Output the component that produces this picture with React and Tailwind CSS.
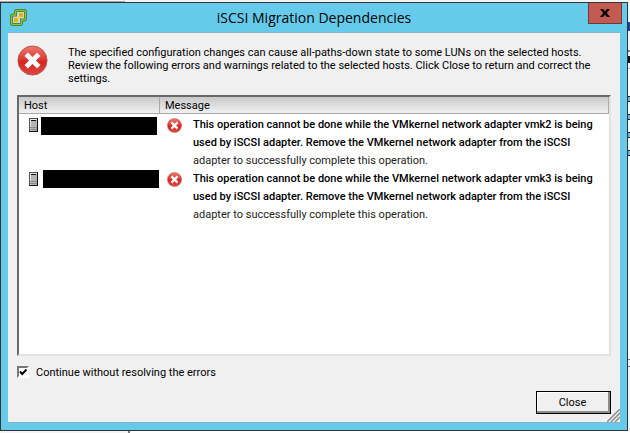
import React, { useState } from 'react';

const ROWS = [
    { id: 'host-1', adapter: 'vmk2', name: 'mt-[1px] ml-[3px] mr-[3px]' },
    { id: 'host-2', adapter: 'vmk3', name: 'ml-[5px] mr-[1px]' },
];

// edge of the window that sits behind the dialog
const BACKDROP = ['mt-[27px]', 'mt-[12px]', 'mt-[12px]', 'mt-[12px]'];

function ErrorIcon({ className }) {
    return (
        <svg viewBox="0 0 32 32" className={className} aria-hidden="true">
            <defs>
                <linearGradient id="err" x1="0" y1="0" x2="0" y2="1">
                    <stop offset="0" stopColor="#ec7a72" />
                    <stop offset="0.45" stopColor="#df3a32" />
                    <stop offset="0.55" stopColor="#d6241e" />
                    <stop offset="1" stopColor="#dd4a42" />
                </linearGradient>
            </defs>
            <circle cx="16" cy="16" r="15" fill="url(#err)" stroke="#b9534d" strokeWidth="1" />
            <path d="M9.5 9.5l13 13M22.5 9.5l-13 13" stroke="#fff" strokeWidth="5" />
        </svg>
    );
}

function VmIcon() {
    return (
        <svg viewBox="0 0 17 17" className="h-[17px] w-[17px]" aria-hidden="true">
            <path d="M7 1.5h7Q15.5 1.5 15.5 3v6.5Q15.5 11 14 11h-2.500v3Q11.500 15.500 10 15.500H3Q1.500 15.500 1.500 14V7.500Q1.500 6 3 6h2.500V3Q5.500 1.500 7 1.500z" fill="#b9dfe6" stroke="#3c7420" strokeWidth="2.800" />
            <path d="M7 1.5h7Q15.5 1.5 15.5 3v6.5Q15.5 11 14 11h-2.500v3Q11.500 15.500 10 15.500H3Q1.500 15.500 1.500 14V7.500Q1.500 6 3 6h2.500V3Q5.500 1.500 7 1.500z" fill="none" stroke="#8fc43a" strokeWidth="1.400" />
            <path d="M9 4h4v4H9zM4 9h4v4H4z" fill="#f0a91c" />
            <path d="M7 7h3v3H7z" fill="#f7d04a" />
        </svg>
    );
}

function HostIcon() {
    return (
        <svg viewBox="0 0 9 14" className="mt-[2px] h-[14px] w-[9px] shrink-0" shapeRendering="crispEdges" aria-hidden="true">
            <rect width="9" height="14" fill="#111" />
            <rect width="8" height="1" fill="#555" />
            <rect width="1" height="13" fill="#555" />
            <rect x="1" y="1" width="7" height="12" fill="#e4e4e4" />
            <rect x="2" y="2" width="6" height="11" fill="#b4b4b4" />
            <rect x="2" y="2" width="5" height="1" fill="#111" />
            <rect x="1" y="9" width="7" height="1" fill="#8a8a8a" />
            <rect x="1" y="11" width="7" height="1" fill="#8a8a8a" />
        </svg>
    );
}

function Grip() {
    return (
        <svg viewBox="0 0 13 13" className="h-[13px] w-[13px]" aria-hidden="true">
            <path d="M1 13L13 1M5 13l8-8M9 13l4-4" stroke="#fff" strokeWidth="1" />
            <path d="M0 13L13 0M4 13l9-9M8 13l5-5" stroke="#8a8a8a" strokeWidth="1.500" />
        </svg>
    );
}

export default function App() {
    const [checked, setChecked] = useState(true);

    return (
        <div className="flex h-screen flex-col overflow-hidden bg-[#f3f3f3] font-['Roboto','Noto_Sans',sans-serif] text-[11px] text-black">
            <div className="h-[2px] w-[125px] shrink-0 border-b border-[#a5a5a5]" />
            <div className="flex min-h-0 grow">
                <main className="flex min-w-0 grow flex-col border border-[#333] bg-[#66caea] px-[7px] pb-[7px]">
                    <header className="grid h-[29px] shrink-0 grid-cols-[50px_1fr_50px]">
                        <div className="pt-[6px] pl-[2px]"><VmIcon /></div>
                        <h1 className="text-center font-['Open_Sans','Noto_Sans',sans-serif] text-[14px] leading-[30px]">iSCSI Migration Dependencies</h1>
                        <button className="mr-[-2px] ml-auto flex h-[21px] w-[34px] items-center justify-center border border-t-0 border-[#6d3a35] bg-[#c35b52]" aria-label="Close window">
                            <svg viewBox="0 0 10 8" className="h-[8px] w-[10px]" aria-hidden="true">
                                <path d="M0 0h3.200L5 2.400 6.800 0H10L6.700 4 10 8H6.800L5 5.600 3.200 8H0l3.300-4z" />
                            </svg>
                        </button>
                    </header>
                    <section className="relative flex min-h-0 grow flex-col border-y border-[#8bb3c2] bg-[#f0f0f0]">
                        <div className="flex h-[62px] shrink-0 gap-[20px] pt-[12px] pl-[9px]">
                            <ErrorIcon className="h-[31px] w-[31px] shrink-0" />
                            <p className="pt-[1px] leading-[13px] whitespace-nowrap">
                                The specified configuration changes can cause all-paths-down state to some LUNs on the selected hosts.<br />
                                Review the following errors and warnings related to the selected hosts. Click Close to return and correct the<br />
                                settings.
                            </p>
                        </div>
                        <div className="mx-[9px] min-h-0 grow border-2 border-t-[#696969] border-r-[#e3e3e3] border-b-[#e3e3e3] border-l-[#696969] bg-white">
                            <table className="w-full table-fixed border-separate border-spacing-0">
                                <thead>
                                    <tr className="h-[17px] bg-linear-to-b from-[#c9c9c9] to-[#f3f3f3] text-left leading-[15px]">
                                        <th className="w-[141px] border-r border-b border-[#aaa] p-0 pl-[5px] font-normal">Host</th>
                                        <th className="border-r border-b border-[#aaa] p-0 pl-[5px] font-normal">Message</th>
                                    </tr>
                                </thead>
                                <tbody className="before:block before:h-[2px]">
                                    {ROWS.map((row) => (
                                        <tr key={row.id} className="h-[54px] align-top">
                                            <td className="p-0">
                                                <div className="flex items-start pl-[10px]">
                                                    <HostIcon />
                                                    <div className={`h-[18px] grow bg-black ${row.name}`} />
                                                </div>
                                            </td>
                                            <td className="p-0">
                                                <div className="flex gap-[11px] pl-[7px] leading-[18px]">
                                                    <ErrorIcon className="mt-[2px] h-[15px] w-[15px] shrink-0" />
                                                    <p className="whitespace-nowrap">
                                                        <span className="font-medium">This operation cannot be done while the VMkernel network adapter {row.adapter} is being</span><br />
                                                        <span className="font-medium">used by iSCSI adapter. Remove the VMkernel network adapter from the iSCSI</span><br />
                                                        <span className="text-[#222]">adapter to successfully complete this operation.</span>
                                                    </p>
                                                </div>
                                            </td>
                                        </tr>
                                    ))}
                                </tbody>
                            </table>
                        </div>
                        <footer className="flex h-[66px] shrink-0 items-start justify-between px-[9px] pt-[8px]">
                            <label className="flex h-[16px] items-center gap-[7px]">
                                <span className="grid">
                                    <input
                                        type="checkbox"
                                        checked={checked}
                                        onChange={() => setChecked(!checked)}
                                        className="peer col-start-1 row-start-1 h-[12px] w-[12px] appearance-none border-2 border-t-[#777] border-r-white border-b-white border-l-[#777] bg-white"
                                    />
                                    <svg viewBox="0 0 12 12" className="pointer-events-none invisible col-start-1 row-start-1 h-[12px] w-[12px] peer-checked:visible" aria-hidden="true">
                                        <path d="M3 5.500l2.200 2.500L9.500 3.500" fill="none" stroke="#000" strokeWidth="2" />
                                    </svg>
                                </span>
                                <span className="pt-[2px]">Continue without resolving the errors</span>
                            </label>
                            <button className="mt-[27px] h-[23px] w-[75px] border border-black bg-[#f0f0f0] pt-[1px] pr-[2px] shadow-[inset_-2px_-2px_0_#8c8c8c,inset_1px_1px_0_#fff]">Close</button>
                        </footer>
                        <div className="absolute right-0 bottom-0"><Grip /></div>
                    </section>
                </main>
                <div className="flex w-[2px] shrink-0 flex-col overflow-hidden" aria-hidden="true">
                    <div className="mt-[20px] h-[9px] shrink-0 bg-[#2b3a9a]" />
                    <div className="mt-[19px] h-[2px] shrink-0 bg-[#777]" />
                    <div className="mt-[4px] h-[7px] shrink-0 bg-[#111]" />
                    <div className="mt-[5px] h-px shrink-0 bg-[#aaa]" />
                    <div className="flex grow flex-col bg-white">
                        {BACKDROP.map((gap, i) => (
                            <div key={i} className={`h-[6px] w-[2px] shrink-0 border-y border-[#222] bg-[#7ab0d8] ${gap}`} />
                        ))}
                    </div>
                    <div className="h-px shrink-0 bg-[#777]" />
                    <div className="mt-[6px] mb-[64px] h-px shrink-0 bg-[#777]" />
                </div>
            </div>
            <div className="flex h-[2px] shrink-0 bg-[#f3f3f3]">
                <div className="w-[130px] border-r-2 border-[#777]" />
                <div className="grow bg-white" />
            </div>
        </div>
    );
}
